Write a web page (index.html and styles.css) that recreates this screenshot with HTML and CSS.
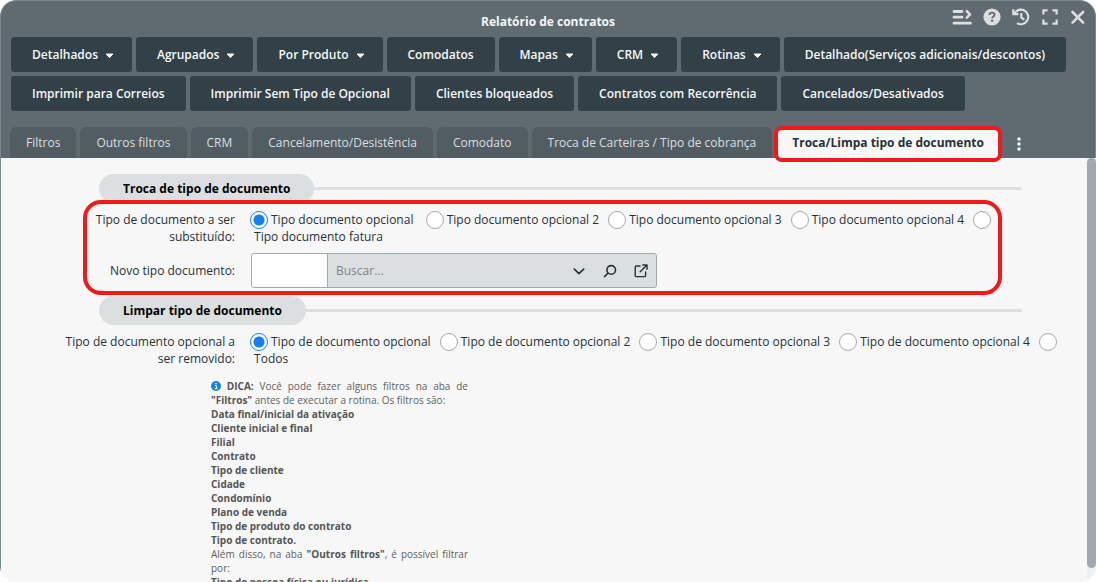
FILE: index.html
```html
<!DOCTYPE html>
<html lang="pt-BR">
<head>
<meta charset="utf-8">
<meta name="viewport" content="width=device-width, initial-scale=1">
<title>Relatório de contratos</title>
<link rel="stylesheet" href="styles.css">
</head>
<body>
<main class="window">
  <header class="header">
    <div class="titlebar">
      <h1 class="title">Relatório de contratos</h1>
      <div class="window-tools">
        <button class="tool" type="button" aria-label="Menu"><svg width="20" height="18" viewBox="0 0 20 18" fill="none" stroke="currentColor" stroke-width="2.8" stroke-linecap="round" stroke-linejoin="round"><path d="M2 3.5h8M2 9.2h8M2 15.2h16.5"/><path d="M14.8 3.2l3.2 3.2-3.2 3.2" stroke-width="2.6"/></svg></button>
        <button class="tool" type="button" aria-label="Ajuda"><svg width="18" height="18" viewBox="0 0 18 18"><circle cx="9" cy="9" r="8.6" fill="currentColor"/><path d="M6.5 7c.1-1.5 1.1-2.3 2.6-2.3s2.5.8 2.5 2c0 1.7-2.4 1.8-2.4 3.5" fill="none" stroke="#5f6b70" stroke-width="1.8"/><circle cx="9.1" cy="12.8" r="1.2" fill="#5f6b70"/></svg></button>
        <button class="tool" type="button" aria-label="Histórico"><svg width="18" height="18" viewBox="0 0 18 18" fill="none" stroke="currentColor" stroke-width="2.2"><path d="M2.6 5.2A7.3 7.3 0 1 1 5 15.1"/><path d="M1.3 1.2v5h5.2M9.3 5v4.6l3 2"/></svg></button>
        <button class="tool" type="button" aria-label="Tela cheia"><svg width="18" height="18" viewBox="0 0 18 18" fill="none" stroke="currentColor" stroke-width="2.2"><path d="M2.4 6.6V2.4h4.2M11.4 2.4h4.2v4.2M15.6 11.4v4.2h-4.2M6.6 15.6H2.4v-4.2"/></svg></button>
        <button class="tool" type="button" aria-label="Fechar"><svg width="16" height="18" viewBox="0 0 16 18" fill="none" stroke="currentColor" stroke-width="2.6" stroke-linecap="round"><path d="M2.5 4l10.6 10.6M13.1 4L2.5 14.6"/></svg></button>
      </div>
    </div>
    <div class="actions">
      <button class="action menu" type="button">Detalhados<svg class="caret" width="9" height="6" viewBox="0 0 9 6"><path d="M1.2 1h6.6L4.5 4.7z"/></svg></button>
      <button class="action menu" type="button">Agrupados<svg class="caret" width="9" height="6" viewBox="0 0 9 6"><path d="M1.2 1h6.6L4.5 4.7z"/></svg></button>
      <button class="action menu" type="button">Por Produto<svg class="caret" width="9" height="6" viewBox="0 0 9 6"><path d="M1.2 1h6.6L4.5 4.7z"/></svg></button>
      <button class="action" type="button">Comodatos</button>
      <button class="action menu" type="button">Mapas<svg class="caret" width="9" height="6" viewBox="0 0 9 6"><path d="M1.2 1h6.6L4.5 4.7z"/></svg></button>
      <button class="action menu" type="button">CRM<svg class="caret" width="9" height="6" viewBox="0 0 9 6"><path d="M1.2 1h6.6L4.5 4.7z"/></svg></button>
      <button class="action menu" type="button">Rotinas<svg class="caret" width="9" height="6" viewBox="0 0 9 6"><path d="M1.2 1h6.6L4.5 4.7z"/></svg></button>
      <button class="action" type="button">Detalhado(Serviços adicionais/descontos)</button>
      <button class="action" type="button">Imprimir para Correios</button>
      <button class="action" type="button">Imprimir Sem Tipo de Opcional</button>
      <button class="action" type="button">Clientes bloqueados</button>
      <button class="action" type="button">Contratos com Recorrência</button>
      <button class="action" type="button">Cancelados/Desativados</button>
    </div>
    <nav class="tabs">
      <button class="tab" type="button">Filtros</button>
      <button class="tab" type="button">Outros filtros</button>
      <button class="tab" type="button">CRM</button>
      <button class="tab" type="button">Cancelamento/Desistência</button>
      <button class="tab" type="button">Comodato</button>
      <button class="tab" type="button">Troca de Carteiras / Tipo de cobrança</button>
      <button class="tab tab-active" type="button">Troca/Limpa tipo de documento</button>
      <button class="more" type="button" aria-label="Mais abas"><svg width="4" height="16" viewBox="0 0 4 16" fill="currentColor"><circle cx="2" cy="3" r="1.7"/><circle cx="2" cy="8" r="1.7"/><circle cx="2" cy="13" r="1.7"/></svg></button>
    </nav>
  </header>
  <div class="body">
    <div class="content">
      <div class="section-head"><h2 class="pill">Troca de tipo de documento</h2><span class="rule"></span></div>
      <section class="fields highlighted">
        <div class="label" id="troca">Tipo de documento a ser substituído:</div>
        <div class="options" role="radiogroup" aria-labelledby="troca">
          <input class="radio" type="radio" name="troca" id="t1" checked><label class="option" for="t1">Tipo documento opcional&nbsp;</label>
          <input class="radio" type="radio" name="troca" id="t2"><label class="option" for="t2">Tipo documento opcional 2</label>
          <input class="radio" type="radio" name="troca" id="t3"><label class="option" for="t3">Tipo documento opcional 3</label>
          <input class="radio" type="radio" name="troca" id="t4"><label class="option" for="t4">Tipo documento opcional 4</label>
          <input class="radio" type="radio" name="troca" id="t5"> <label class="option" for="t5">&nbsp;Tipo documento fatura</label>
        </div>
        <label class="label" for="novo">Novo tipo documento:</label>
        <div class="lookup">
          <input class="lookup-code" id="novo" type="text">
          <input class="lookup-search" type="text" placeholder="Buscar..." aria-label="Buscar tipo documento">
          <button class="lookup-button" type="button" aria-label="Abrir lista"><svg width="14" height="14" viewBox="0 0 14 14" fill="none" stroke="currentColor" stroke-width="1.7" stroke-linecap="round" stroke-linejoin="round"><path d="M2.3 5.2L7 9.7l4.7-4.5"/></svg></button>
          <button class="lookup-button" type="button" aria-label="Pesquisar"><svg width="14" height="14" viewBox="0 0 14 14" fill="none" stroke="currentColor" stroke-width="1.6" stroke-linecap="round"><circle cx="8.2" cy="5.9" r="4.3"/><path d="M5.1 9L1.5 12.6"/></svg></button>
          <button class="lookup-button" type="button" aria-label="Abrir cadastro"><svg width="14" height="14" viewBox="0 0 14 14" fill="none" stroke="currentColor" stroke-width="1.4" stroke-linecap="round" stroke-linejoin="round"><path d="M6 2H2.4a1.2 1.2 0 0 0-1.2 1.2v8.2a1.2 1.2 0 0 0 1.2 1.2h8a1.2 1.2 0 0 0 1.2-1.2V8M8.8 1H13v4.2M12.7 1.3L6.2 7.8"/></svg></button>
        </div>
      </section>
      <div class="section-head"><h2 class="pill">Limpar tipo de documento</h2><span class="rule"></span></div>
      <section class="fields">
        <div class="label" id="limpa">Tipo de documento opcional a ser removido:</div>
        <div class="options" role="radiogroup" aria-labelledby="limpa">
          <input class="radio" type="radio" name="limpa" id="l1" checked><label class="option" for="l1">Tipo de documento opcional</label>
          <input class="radio" type="radio" name="limpa" id="l2"><label class="option" for="l2">Tipo de documento opcional 2</label>
          <input class="radio" type="radio" name="limpa" id="l3"><label class="option" for="l3">Tipo de documento opcional 3</label>
          <input class="radio" type="radio" name="limpa" id="l4"><label class="option" for="l4">Tipo de documento opcional 4</label>
          <input class="radio" type="radio" name="limpa" id="l5"> <label class="option" for="l5">&nbsp;Todos</label>
        </div>
      </section>
      <p class="tip"><svg class="tip-icon" width="10" height="10" viewBox="0 0 10 10"><circle cx="5" cy="5" r="5" fill="#1583e0"/><path d="M4 4.4h1.4v3.2M3.8 7.6h2.6" fill="none" stroke="#fff" stroke-width="1"/><circle cx="5" cy="2.5" r=".8" fill="#fff"/></svg> <b>DICA:</b> Você pode fazer alguns filtros na aba de <b>"Filtros"</b> antes de executar a rotina. Os filtros são:<br>
        <b>Data final/inicial da ativação</b><br>
        <b>Cliente inicial e final</b><br>
        <b>Filial</b><br>
        <b>Contrato</b><br>
        <b>Tipo de cliente</b><br>
        <b>Cidade</b><br>
        <b>Condomínio</b><br>
        <b>Plano de venda</b><br>
        <b>Tipo de produto do contrato</b><br>
        <b>Tipo de contrato.</b><br>
        Além disso, na aba <b>"Outros filtros"</b>, é possível filtrar por:<br>
        <b>Tipo de pessoa física ou jurídica</b></p>
    </div>
    <div class="scrollbar"><div class="thumb"></div></div>
  </div>
</main>
</body>
</html>
```
FILE: styles.css
```css
* { box-sizing: border-box; }

body {
  margin: 0;
  background: #fff;
  color: #263238;
  font: 12px/17px "Open Sans", "Noto Sans", sans-serif;
}

button, input { font: inherit; color: inherit; margin: 0; }
button { border: 0; cursor: pointer; }

.window {
  display: flex;
  flex-direction: column;
  height: 100vh;
  overflow: hidden;
  border-radius: 16px;
  background: #f7f7f7;
}

.header {
  background: #5f6b70;
  border: 1px solid #7b888e;
  border-bottom: 0;
  border-radius: 16px 16px 0 0;
}

/* title bar */
.titlebar {
  display: grid;
  grid-template-columns: 1fr auto 1fr;
  height: 36px;
  padding: 0 9px;
}
.title {
  grid-column: 2;
  margin: 12px 0 0;
  font-size: 12px;
  font-weight: 700;
  line-height: 17px;
  color: #f7f7f7;
}
.window-tools {
  display: flex;
  justify-content: flex-end;
  align-items: flex-start;
  gap: 11px;
  padding-top: 7px;
}
.tool {
  display: flex;
  padding: 0;
  background: none;
  color: #dbdfe0;
}

/* report buttons */
.actions {
  display: flex;
  flex-wrap: wrap;
  gap: 4px;
  padding: 0 10px;
}
.action {
  display: flex;
  align-items: center;
  gap: 7px;
  height: 35px;
  padding: 0 21px;
  border-radius: 3px;
  background: #324148;
  color: #f7f7f7;
  font-weight: 600;
  white-space: nowrap;
}
.menu { padding-right: 18px; }
.caret {
  margin-top: 2px;
  fill: #fff;
  stroke: #fff;
  stroke-linejoin: round;
}

/* tabs */
.tabs {
  display: flex;
  gap: 4px;
  padding: 16px 9px 0;
}
.tab {
  height: 31px;
  padding: 0 16px;
  border-radius: 6px 6px 0 0;
  background: #515d62;
  color: #dbdfe0;
  white-space: nowrap;
}
.tab-active {
  position: relative;
  background: #f7f7f7;
  color: #263238;
  font-weight: 700;
}
.tab-active::after {
  content: "";
  position: absolute;
  inset: -1px -2px -4px;
  border: 4px solid #f31919;
  border-radius: 8px;
}
.more {
  display: flex;
  align-items: center;
  padding: 3px 13px 0;
  background: none;
  color: #f7f7f7;
}

/* scrolling body */
.body {
  display: flex;
  flex: 1;
  min-height: 0;
}
.content {
  flex: 1;
  min-width: 0;
  overflow: hidden;
  padding-top: 16px;
  border-left: 1px solid #7b888e;
}
.scrollbar {
  width: 9px;
  padding-bottom: 14px;
  background: #e8f2f5;
}
.thumb {
  height: 100%;
  border-radius: 5px;
  background: #a0a9ae;
}

.section-head {
  display: flex;
  align-items: center;
  padding: 0 65px 0 98px;
}
.pill {
  margin: 0;
  padding: 6px 24px;
  border-radius: 15px;
  background: #dbdfe0;
  color: #000;
  font-size: 12px;
  font-weight: 700;
  line-height: 17px;
}
.rule {
  flex: 1;
  height: 3px;
  border-radius: 0 2px 2px 0;
  background: #dbdfe0;
}

/* form rows */
.fields {
  position: relative;
  display: grid;
  grid-template-columns: 184px 1fr;
  gap: 8px 16px;
  align-items: center;
  padding: 8px 16px 8px 50px;
}
.highlighted::after {
  content: "";
  position: absolute;
  inset: -3px 85px 1px 82px;
  border: 4px solid #f31919;
  border-radius: 18px;
  pointer-events: none;
}
.label { text-align: right; }
.radio {
  appearance: none;
  width: 18px;
  height: 18px;
  margin: -3px 3px -1px 6px;
  border: 1px solid #a0a9ae;
  border-radius: 50%;
  background: #fff;
  vertical-align: middle;
}
.radio:first-child { margin-left: -1px; }
.radio:checked {
  border-color: #157dfa;
  background: radial-gradient(circle, #157dfa 5px, #fff 6px);
}
.option { white-space: nowrap; }

.lookup {
  display: flex;
  align-items: center;
  width: 406px;
  max-width: 100%;
  height: 35px;
  border: 1px solid #a0a9ae;
  border-radius: 3px;
  overflow: hidden;
  background: #dbdfe0;
}
.lookup-code {
  width: 76px;
  height: 100%;
  border: 0;
  border-right: 1px solid #a0a9ae;
  background: #fff;
}
.lookup-search {
  flex: 1;
  min-width: 0;
  padding: 0 8px;
  border: 0;
  background: none;
}
.lookup-search::placeholder { color: #838383; }
.lookup-button {
  display: flex;
  justify-content: center;
  width: 31px;
  padding: 0;
  background: none;
}

.tip {
  width: 257px;
  margin: 4px 0 0 210px;
  color: #616161;
  font-size: 10px;
  line-height: 14px;
  text-align: justify;
}
.tip b { color: #555; }
.tip-icon { vertical-align: -1px; }
```
